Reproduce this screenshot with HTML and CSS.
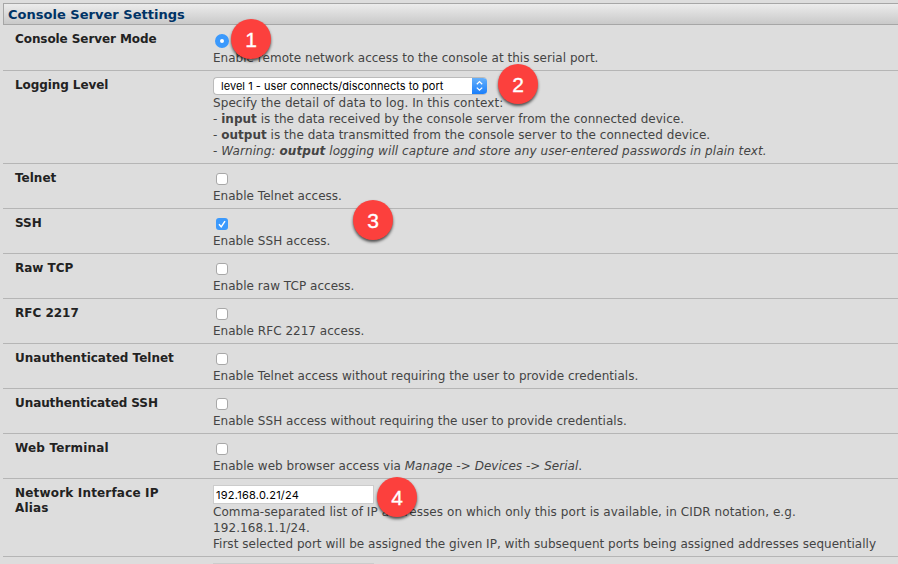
FILE: index.html
```html
<!DOCTYPE html>
<html lang="en">
<head>
<meta charset="utf-8">
<title>Console Server Settings</title>
<link rel="stylesheet" href="styles.css">
</head>
<body>
<main class="settings">
  <h1 class="heading"><span>Console Server Settings</span></h1>
  <section class="row">
    <h2 class="label tight">Console Server Mode</h2>
    <div class="field">
      <div class="control control-tall"><span class="radio"></span></div>
      <p>Enable remote network access to the console at this serial port.</p>
      <span class="badge badge-1">1</span>
    </div>
  </section>
  <section class="row">
    <h2 class="label tight">Logging Level</h2>
    <div class="field">
      <div class="select"><span class="select-text">level 1 - user connects/disconnects to port</span><span class="stepper"><svg width="15" height="17" viewBox="0 0 15 17"><path d="M4.8 7.2 7.5 4.6l2.7 2.6M4.8 10.6 7.5 13.2l2.7-2.6"/></svg></span></div>
      <p class="wide">Specify the detail of data to log. In this context:</p>
      <p>- <b>input</b> is the data received by the console server from the connected device.</p>
      <p>- <b>output</b> is the data transmitted from the console server to the connected device.</p>
      <p class="wide">- <i>Warning: <b>output</b> logging will capture and store any user-entered passwords in plain text.</i></p>
      <span class="badge badge-2">2</span>
    </div>
  </section>
  <section class="row">
    <h2 class="label">Telnet</h2>
    <div class="field">
      <div class="control"><span class="check"></span></div>
      <p>Enable Telnet access.</p>
    </div>
  </section>
  <section class="row">
    <h2 class="label">SSH</h2>
    <div class="field">
      <div class="control"><span class="check checked"><svg width="12" height="12" viewBox="0 0 12 12"><path d="M3 6.3 5.2 8.8 9 3.2"/></svg></span></div>
      <p>Enable SSH access.</p>
      <span class="badge badge-3">3</span>
    </div>
  </section>
  <section class="row">
    <h2 class="label">Raw TCP</h2>
    <div class="field">
      <div class="control"><span class="check"></span></div>
      <p>Enable raw TCP access.</p>
    </div>
  </section>
  <section class="row">
    <h2 class="label">RFC 2217</h2>
    <div class="field">
      <div class="control"><span class="check"></span></div>
      <p>Enable RFC 2217 access.</p>
    </div>
  </section>
  <section class="row">
    <h2 class="label">Unauthenticated Telnet</h2>
    <div class="field">
      <div class="control"><span class="check"></span></div>
      <p>Enable Telnet access without requiring the user to provide credentials.</p>
    </div>
  </section>
  <section class="row">
    <h2 class="label tight">Unauthenticated SSH</h2>
    <div class="field">
      <div class="control"><span class="check"></span></div>
      <p>Enable SSH access without requiring the user to provide credentials.</p>
    </div>
  </section>
  <section class="row">
    <h2 class="label loose">Web Terminal</h2>
    <div class="field">
      <div class="control"><span class="check"></span></div>
      <p>Enable web browser access via <i>Manage -&gt; Devices -&gt; Serial</i>.</p>
    </div>
  </section>
  <section class="row">
    <h2 class="label loose">Network Interface IP<br>Alias</h2>
    <div class="field">
      <div class="input">192.168.0.21/24</div>
      <p class="wide">Comma-separated list of IP addresses on which only this port is available, in CIDR notation, e.g.<br>192.168.1.1/24.</p>
      <p>First selected port will be assigned the given IP, with subsequent ports being assigned addresses sequentially</p>
      <span class="badge badge-4">4</span>
    </div>
  </section>
  <section class="row">
    <h2 class="label"></h2>
    <div class="field"><div class="input"></div></div>
  </section>
</main>
</body>
</html>
```
FILE: styles.css
```css
* { box-sizing: border-box; }
body {
  margin: 0;
  height: 564px;
  overflow: hidden;
  background: #ddd;
  color: #444;
  font: 12px/16px "DejaVu Sans", Verdana, sans-serif;
}
.settings { padding: 3px 0 0 3px; }
.heading {
  display: flex;
  align-items: center;
  height: 22px;
  margin: 0;
  padding: 1px 0 0 4px;
  border: 1px solid #a6a6a6;
  border-right: 0;
  background: linear-gradient(#ececec, #c9c9c9);
  color: #036;
  font-size: 13px;
  letter-spacing: .02px;
}
.row {
  display: grid;
  grid-template-columns: 198px 1fr;
  padding: 6px 0 4px 12px;
  border-bottom: 1px solid #b5b5b5;
}
.label {
  margin: 0;
  padding-top: 1px;
  color: #222;
  font-size: 12px;
  line-height: 15px;
}
.tight { letter-spacing: -.08px; }
.loose { letter-spacing: .18px; }
.field { position: relative; white-space: nowrap; }
.field p { margin: 0; letter-spacing: .024px; }
.field .wide { letter-spacing: .075px; }
.control { display: flex; align-items: center; height: 18px; padding-left: 3px; }
.control-tall { height: 19px; padding: 1px 0 0 2px; }
.radio {
  width: 14px;
  height: 14px;
  border: 5px solid #3b99fc;
  border-radius: 50%;
  background: #fff;
}
.check {
  width: 12px;
  height: 12px;
  border: 1px solid #a8a8a8;
  border-radius: 3px;
  background: #fff;
}
.checked { border: 0; background: #3b99fc; }
.check svg, .stepper svg { display: block; fill: none; stroke: #fff; stroke-width: 1.5; }
.select {
  display: flex;
  justify-content: space-between;
  width: 274px;
  height: 18px;
  overflow: hidden;
  border: 1px solid #bbb;
  border-right: 0;
  border-radius: 4px;
  background: #fff;
  color: #000;
  font: 11px/17px Inter, sans-serif;
}
.select-text { padding-left: 7px; letter-spacing: .03px; }
.stepper {
  width: 15px;
  margin: -1px 0;
  background: linear-gradient(#6bb3fa, #147bfb);
}
.stepper svg { stroke-width: 1.3; }
.input {
  width: 161px;
  height: 19px;
  padding-left: 2px;
  border: 1px solid #ccc;
  background: #fff;
  color: #000;
  font: 11px/19px Inter, sans-serif;
  letter-spacing: .24px;
}
.badge {
  position: absolute;
  width: 40px;
  height: 40px;
  border-radius: 50%;
  background: #fc403d;
  box-shadow: 0 2px 3px rgba(0, 0, 0, .65);
  color: #fff;
  font: 21px/41px "Liberation Sans", sans-serif;
  -webkit-text-stroke: .35px #fff;
  text-align: center;
}
.badge-1 { left: 18px; top: -12px; }
.badge-2 { left: 285px; top: -13px; }
.badge-3 { left: 140px; top: -15px; }
.badge-4 { left: 164px; top: -8px; }
```
